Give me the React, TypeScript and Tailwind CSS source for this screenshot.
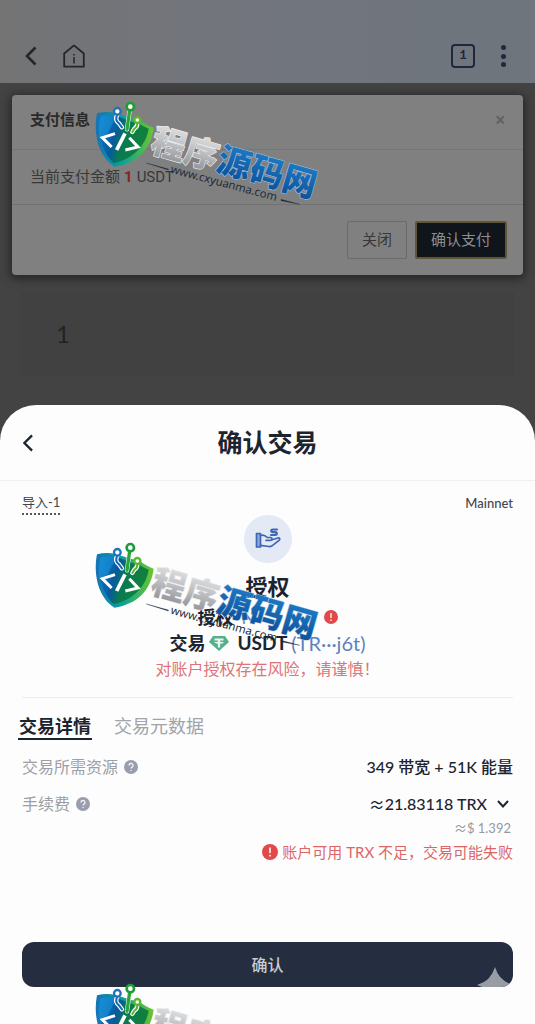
import React from 'react';

interface IconProps {
    className?: string;
}

function BackIcon({ className }: IconProps) {
    return (
        <svg className={className} viewBox="0 0 12 20" fill="none" stroke="currentColor" strokeWidth="2.6" aria-hidden="true">
            <path d="M10.5 1.5 2 10l8.5 8.5" />
        </svg>
    );
}

function HomeIcon() {
    return (
        <svg className="h-6 w-6" viewBox="0 0 24 24" fill="none" stroke="currentColor" strokeWidth="1.8" strokeLinejoin="round" aria-hidden="true">
            <path d="M2.2 9.5 12 1.4l9.8 8.1v13.2H2.2z" />
            <path d="M12 13v6.5M12 10v1.4" strokeWidth="1.5" />
        </svg>
    );
}

function HelpIcon() {
    return (
        <svg className="h-3.5 w-3.5" viewBox="0 0 14 14" aria-hidden="true">
            <circle cx="7" cy="7" r="7" fill="#9a9dae" />
            <path d="M5 5.5a2 2 0 1 1 2.8 1.8c-.5.2-.8.5-.8 1.1M7 10v1" fill="none" stroke="#f4f4f8" strokeWidth="1.3" />
        </svg>
    );
}

function AlertIcon({ className }: IconProps) {
    return (
        <svg className={className} viewBox="0 0 16 16" aria-hidden="true">
            <circle cx="8" cy="8" r="8" fill="#e14a4a" />
            <path d="M8 3.5v5.5M8 10.8v1.8" stroke="#fbe3e3" strokeWidth="1.8" />
        </svg>
    );
}

function TetherIcon() {
    return (
        <svg className="h-4 w-5" viewBox="0 0 20 16" aria-hidden="true">
            <path d="M4 1h12l4 6-10 9L0 7z" fill="#55b18d" />
            <path d="M5.5 3.5h9v2h-3.4v1.2c2 .1 3.6.5 3.6 1s-1.6.9-3.6 1v3.8H8.900V8.700c-2-.1-3.600-.5-3.600-1s1.600-.9 3.600-1V5.500H5.500z" fill="#e9f7f1" />
        </svg>
    );
}

function HandCoinIcon() {
    return (
        <svg className="h-7 w-7" viewBox="0 0 28 28" fill="none" stroke="#3f66b5" strokeWidth="1.7" strokeLinejoin="round" strokeLinecap="round" aria-hidden="true">
            <path d="M2.5 8.500h4v13.500h-4z" fill="#8eaadb" />
            <path d="M6.500 10.500c3-1.200 5 .2 6.800 2h3.200c2 0 2 2.800 0 2.800h-4.500M17.500 15l6.300-2c2-.5 2.600 1.300 1.200 2.300l-7 5.500c-1 .7-2 .9-3.200.7l-8.300-1.200" />
            <path d="M23 4.500h-4c-2.300 0-2.300 2.700 0 2.700h2c2.400 0 2.400 2.800 0 2.800h-4" strokeWidth="2.2" />
        </svg>
    );
}

// Brand mark: circuit shield, slanted name and site address
function SiteLogo({ id, className }: { id: string; className: string }) {
    return (
        <svg className={`pointer-events-none absolute left-[85px] z-10 h-[120px] w-[240px] overflow-visible ${className}`} viewBox="0 0 720 360" aria-hidden="true">
            <defs>
                <linearGradient id={`${id}-shield`} x1="0" y1="0" x2="1" y2="0.3">
                    <stop offset="0" stopColor="#0a7fce" />
                    <stop offset="0.4" stopColor="#075a9c" />
                    <stop offset="0.6" stopColor="#087c50" />
                    <stop offset="1" stopColor="#12803b" />
                </linearGradient>
                <linearGradient id={`${id}-edge`} x1="0" y1="0" x2="1" y2="0">
                    <stop offset="0" stopColor="#1673b8" />
                    <stop offset="0.45" stopColor="#08a19a" />
                    <stop offset="1" stopColor="#6cc62b" />
                </linearGradient>
                <linearGradient id={`${id}-silver`} x1="0" y1="0" x2="0" y2="1">
                    <stop offset="0" stopColor="#f0f0f1" />
                    <stop offset="0.5" stopColor="#bfc1c4" />
                    <stop offset="1" stopColor="#85888d" />
                </linearGradient>
                <linearGradient id={`${id}-blue`} x1="0" y1="0" x2="0" y2="1">
                    <stop offset="0" stopColor="#2284d0" />
                    <stop offset="1" stopColor="#0a4b92" />
                </linearGradient>
            </defs>
            <path d="M36 70q28-7 56-1l50 16 22 4q16 14 42 24c-8 64-48 106-118 117C40 200 24 130 36 70z" fill={`url(#${id}-edge)`} />
            <path d="M47 79q24-6 48-1l48 18 18 4q12 10 30 16c-8 48-42 88-104 104C50 188 38 130 47 79z" fill={`url(#${id}-shield)`} />
            <path d="M47 79q24-6 48-1l-28 54-24 8c-2-22 0-42 4-61z" fill="#23a1e6" opacity="0.45" />
            <g fill="none" strokeLinecap="round">
                <g stroke="#fff" strokeWidth="13">
                    <path d="M97 74q-9 16 5 26l9 12M134 60l-8 58M156 98q3 12-8 18l-6 10" />
                </g>
                <g strokeWidth="6">
                    <path d="M97 74q-9 16 5 26l9 12" stroke="#1769b4" />
                    <path d="M134 60l-8 58" stroke="#2da43a" strokeWidth="10" />
                    <path d="M156 98q3 12-8 18l-6 10" stroke="#58b52e" />
                </g>
                <circle cx="97" cy="64" r="10" fill="#fff" stroke="#1d73c0" strokeWidth="7" />
                <circle cx="136" cy="50" r="11" fill="#fff" stroke="#1f9b3a" strokeWidth="8" />
                <circle cx="157" cy="90" r="9" fill="#fff" stroke="#5ab82c" strokeWidth="7" />
            </g>
            <g fill="none" stroke="#fff">
                <path d="M90 131l-38 12 28 28" strokeWidth="9" />
                <path d="M120 130l-25 50" strokeWidth="11" />
                <path d="M133 143l26 28-38 9" strokeWidth="9" />
            </g>
            <g transform="rotate(16 205 150)" fontFamily='"Noto Sans CJK SC", sans-serif' fontSize="102" fontWeight="900" paintOrder="stroke" strokeLinejoin="round">
                <text x="203" y="186" fill={`url(#${id}-silver)`} stroke="#eeeeef" strokeWidth="4">程序</text>
                <text x="407" y="186" fill={`url(#${id}-blue)`} stroke="#a9c8e4" strokeWidth="3">源码网</text>
            </g>
            <text transform="rotate(15 256 244)" x="256" y="248" fill="#1f2c3a" fontFamily='"Noto Sans", sans-serif' fontSize="34">www.cxyuanma.com</text>
            <path d="M184 219l66 18v3zM588 328l56 15-56-11z" fill="#1f2c3a" stroke="#1f2c3a" />
        </svg>
    );
}

function TopBar() {
    return (
        <header className="flex h-[83px] items-end justify-between bg-linear-to-r from-[#747475] via-[#72757e] to-[#6e757c] px-6 pb-[15px] text-[#25262b]">
            <div className="flex items-center gap-6">
                <button type="button" aria-label="返回">
                    <BackIcon className="h-5 w-3.5" />
                </button>
                <button type="button" aria-label="主页">
                    <HomeIcon />
                </button>
            </div>
            <div className="flex items-center gap-5 text-[#20283a]">
                <button type="button" className="flex h-6 w-6 items-center justify-center rounded-sm border-2 border-current font-['Liberation_Mono',monospace] text-xs font-bold">
                    1
                </button>
                <button type="button" aria-label="菜单" className="flex h-6 w-4 flex-col items-center justify-between py-px">
                    <span className="h-[5px] w-[5px] rounded-full bg-current" />
                    <span className="h-[5px] w-[5px] rounded-full bg-current" />
                    <span className="h-[5px] w-[5px] rounded-full bg-current" />
                </button>
            </div>
        </header>
    );
}

function PayDialog() {
    return (
        <section className="mx-3 mt-3 rounded-sm bg-[#808080] font-[Roboto,'Noto_Sans_CJK_SC',sans-serif] text-[15px] text-[#383838] shadow-[0_2px_8px_2px_#262626]">
            <div className="flex h-[55px] items-center justify-between border-b border-[#767676] px-[18px] pb-1">
                <h2 className="font-bold text-[#2a2a2a]">支付信息</h2>
                <button type="button" aria-label="取消" className="text-lg font-bold text-[#626262]">×</button>
            </div>
            <p className="flex h-[55px] items-center gap-1 border-b border-[#727272] px-[18px]">
                当前支付金额 <b className="text-[#8c2028]">1</b> <span>USDT</span>
            </p>
            <div className="flex justify-end gap-2 p-4">
                <button type="button" className="h-[38px] rounded-xs border border-[#6b6b6b] px-3.5">关闭</button>
                <button type="button" className="h-[38px] rounded-xs border-2 border-[#5f5637] bg-[#10151c] px-3.5 text-[#8c8e92]">确认支付</button>
            </div>
        </section>
    );
}

function TokenSummary() {
    return (
        <div className="flex flex-col items-center border-b border-[#ececee] pb-3.5">
            <span className="flex h-12 w-12 items-center justify-center rounded-full bg-[#e3e9f5]">
                <HandCoinIcon />
            </span>
            <h2 className="mt-2 text-[22px] leading-8 font-bold">授权</h2>
            <p className="flex h-7 items-center gap-2 text-lg font-bold">
                授权
                <span className="w-[74px] font-normal text-[#5f82c0]">N</span>
                <AlertIcon className="h-3.5 w-3.5" />
            </p>
            <p className="flex h-6 items-center gap-1 text-lg font-bold">
                交易
                <TetherIcon />
                <span className="pl-1 text-[19px]">USDT</span>
                <a href="#token" className="text-xl font-normal text-[#5f82c0]">(TR···j6t)</a>
            </p>
            <p className="text-[16px] leading-7 text-[#df7378]">对账户授权存在风险，请谨慎！</p>
        </div>
    );
}

function ConfirmSheet() {
    return (
        <main className="relative flex flex-1 flex-col rounded-t-[36px] bg-[#fdfdfd] text-[#1c2430]">
            <div className="grid h-[76px] grid-cols-[1fr_auto_1fr] items-center border-b border-[#f0f0f1] px-[22px]">
                <button type="button" aria-label="返回" className="justify-self-start">
                    <BackIcon className="h-[18px] w-3" />
                </button>
                <h1 className="text-[25px] font-bold">确认交易</h1>
            </div>

            <div className="flex flex-1 flex-col px-[22px] pb-[37px]">
                <div className="flex h-[34px] items-center justify-between pt-3 text-[13px] text-[#43464c]">
                    <button type="button" className="border-b-2 border-dotted border-[#55585e]">导入-1</button>
                    <span className="font-medium">Mainnet</span>
                </div>

                <TokenSummary />

                <div className="-ml-1 flex gap-[22px] pt-3.5 text-lg" role="tablist">
                    <button type="button" role="tab" aria-selected="true" className="h-7 border-b-2 border-current px-px font-bold">交易详情</button>
                    <button type="button" role="tab" aria-selected="false" className="h-7 text-[#a1a4a8]">交易元数据</button>
                </div>

                <dl className="text-[16px]">
                    <div className="flex h-[54px] items-center justify-between">
                        <dt className="flex items-center gap-1.5 text-[#9c9fa5]">交易所需资源 <HelpIcon /></dt>
                        <dd className="font-medium">349 带宽 + 51K 能量</dd>
                    </div>
                    <div className="flex h-5 items-center justify-between">
                        <dt className="flex items-center gap-1.5 text-[#9c9fa5]">手续费 <HelpIcon /></dt>
                        <dd>
                            <button type="button" className="flex items-center pr-1 font-medium">
                                <span className="font-['Noto_Sans_CJK_SC',sans-serif]">≈</span>
                                21.83118 TRX
                                <svg className="ml-2.5 h-2.5 w-3" viewBox="0 0 12 10" fill="none" stroke="currentColor" strokeWidth="2" aria-hidden="true">
                                    <path d="m1 2 5 5.500L11 2" />
                                </svg>
                            </button>
                        </dd>
                    </div>
                </dl>
                <p className="pr-0.5 pt-0.5 text-right text-[13px] leading-6 text-[#96999e]">
                    <span className="font-['Noto_Sans_CJK_SC',sans-serif]">≈</span>$ 1.392
                </p>
                <p className="flex items-center justify-end gap-1 text-[15px] leading-6 text-[#dc6666]">
                    <AlertIcon className="h-4 w-4" />
                    账户可用 TRX 不足，交易可能失败
                </p>

                <button type="button" className="relative mt-auto h-[45px] overflow-hidden rounded-xl bg-[#242e40] text-[16px] font-medium text-[#c9ccd3]">
                    确认
                    <svg className="absolute right-0 -bottom-4 h-9 w-9" viewBox="0 0 36 36" fill="#979ca5" aria-hidden="true">
                        <path d="M18 0q4 14 18 18-14 4-18 18-4-14-18-18Q14 14 18 0z" />
                    </svg>
                </button>
            </div>
        </main>
    );
}

export default function App() {
    return (
        <div className="relative flex min-h-screen flex-col overflow-hidden bg-[#434343] font-[Lato,'Noto_Sans_CJK_SC',sans-serif]">
            <TopBar />
            <PayDialog />
            <div className="mx-5 mt-4 mb-7 flex h-[86px] items-center rounded-md bg-[#414141] px-9 text-2xl text-[#222]">1</div>
            <ConfirmSheet />
            <SiteLogo id="logo-a" className="top-[90px]" />
            <SiteLogo id="logo-b" className="top-[531px]" />
            <SiteLogo id="logo-c" className="top-[972px]" />
        </div>
    );
}
